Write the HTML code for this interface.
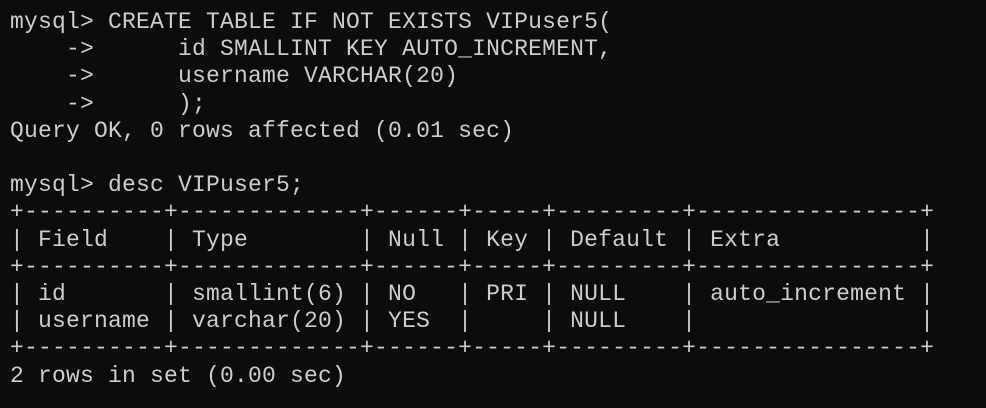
<!DOCTYPE html>
<html><head><style>
html,body{margin:0;background:#0c0c0c;width:986px;height:408px;overflow:hidden}
pre{margin:0;position:absolute;left:10px;top:9px;font-family:"Liberation Mono",monospace;font-size:23px;line-height:27.2px;color:#cccccc;letter-spacing:0.2px}
</style></head><body><pre>mysql&gt; CREATE TABLE IF NOT EXISTS VIPuser5(
    -&gt;      id SMALLINT KEY AUTO_INCREMENT,
    -&gt;      username VARCHAR(20)
    -&gt;      );
Query OK, 0 rows affected (0.01 sec)

mysql&gt; desc VIPuser5;
+----------+-------------+------+-----+---------+----------------+
| Field    | Type        | Null | Key | Default | Extra          |
+----------+-------------+------+-----+---------+----------------+
| id       | smallint(6) | NO   | PRI | NULL    | auto_increment |
| username | varchar(20) | YES  |     | NULL    |                |
+----------+-------------+------+-----+---------+----------------+
2 rows in set (0.00 sec)</pre></body></html>
